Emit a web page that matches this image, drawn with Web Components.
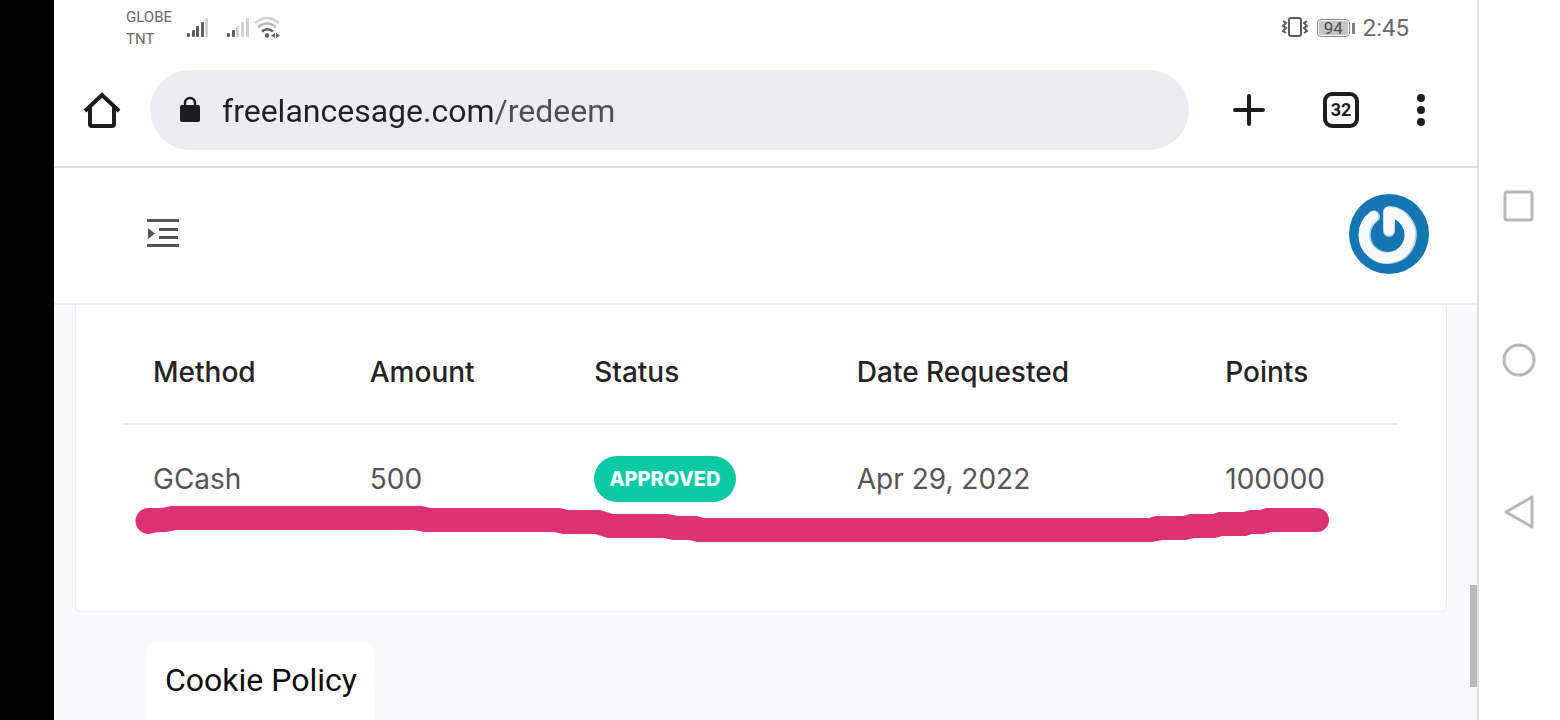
<!DOCTYPE html>
<html lang="en">
<head>
<meta charset="utf-8">
<title>Redeem</title>
<style>
    body {
        margin: 0;
        background: #fff;
        font-family: Roboto, "Liberation Sans", sans-serif;
        color: #202124;
    }
</style>
</head>
<body>
<phone-screen>
    <status-bar slot="top"></status-bar>
    <browser-bar slot="top"></browser-bar>
    <site-header slot="top"></site-header>
    <redeem-card>
        <status-badge slot="status">APPROVED</status-badge>
    </redeem-card>
    <cookie-link>Cookie Policy</cookie-link>
    <system-nav slot="nav"></system-nav>
</phone-screen>

<script>
class BaseElement extends HTMLElement {
    constructor() {
        super();
        this.attachShadow({ mode: 'open' });
        this.shadowRoot.innerHTML = this.render();
    }
}

class PhoneScreen extends BaseElement {
    render() {
        return `
    <style>
        :host {
            display: grid;
            grid-template-columns: 54px 1fr 81px;
            height: 100vh;
            overflow: hidden;
        }
        .cutout { background: #000; }
        .page {
            display: flex;
            flex-direction: column;
            min-width: 0;
            min-height: 0;
            border-right: 2px solid #e0e0e2;
            position: relative;
        }
        main {
            flex: 1;
            min-height: 0;
            overflow: hidden;
            background: #faf9fe;
            padding: 0 30px 0 21px;
        }
        .thumb {
            position: absolute;
            right: 0;
            bottom: 33px;
            width: 7px;
            height: 102px;
            background: #bababa;
        }
    </style>
    <div class="cutout"></div>
    <div class="page">
        <slot name="top"></slot>
        <main><slot></slot></main>
        <div class="thumb"></div>
    </div>
    <slot name="nav"></slot>`;
    }
}

class StatusBar extends BaseElement {
    render() {
        return `
    <style>
        :host {
            display: flex;
            align-items: center;
            height: 56px;
            padding: 0 68px 0 72px;
            color: #69696b;
        }
        .carriers {
            font-size: 15px;
            line-height: 22px;
            width: 60px;
        }
        .signals { flex: 1; }
        svg { display: block; }
        .right {
            display: flex;
            align-items: center;
            gap: 8px;
        }
        .battery {
            display: flex;
            align-items: center;
            gap: 2px;
        }
        .battery span {
            width: 29px;
            height: 14px;
            line-height: 14px;
            border: 1px solid #8c8c8c;
            border-radius: 4px;
            padding: 1px;
            background: #c6c6c6 content-box;
            font-size: 17px;
            text-align: center;
            color: #4c4c4e;
        }
        .battery i {
            width: 3px;
            height: 11px;
            background: #808080;
        }
        time {
            font-size: 24px;
            line-height: 28px;
        }
    </style>
    <div class="carriers">GLOBE<br>TNT</div>
    <div class="signals">
        <svg width="96" height="28" viewBox="0 0 96 28" fill="#5e5e60">
            <g>
                <rect x="1" y="19" width="3" height="4" rx="1"/>
                <rect x="6" y="16" width="3" height="7" rx="1"/>
                <rect x="10" y="12" width="3" height="11" rx="1"/>
                <rect x="15" y="8" width="3" height="15" rx="1"/>
                <rect x="19" y="4" width="3" height="19" rx="1" fill="#d2d2d2"/>
            </g>
            <g>
                <rect x="41" y="19" width="3" height="4" rx="1"/>
                <rect x="46" y="16" width="3" height="7" rx="1"/>
                <rect x="50" y="12" width="3" height="11" rx="1" fill="#d2d2d2"/>
                <rect x="55" y="8" width="3" height="15" rx="1" fill="#d2d2d2"/>
                <rect x="60" y="4" width="3" height="19" rx="1" fill="#d2d2d2"/>
            </g>
            <g fill="none" stroke-width="2.6">
                <path d="M69 9Q81 -1 93 9" stroke="#cecece"/>
                <path d="M72 13Q81 6 90 13" stroke="#b8b8b8"/>
                <path d="M76 17.500Q81 13 87 17.500" stroke="#5e5e60"/>
            </g>
            <circle cx="81" cy="21.500" r="2.200"/>
            <path d="M89 19v5l-4-2.500zM90 19v5l4-2.500z"/>
        </svg>
    </div>
    <div class="right">
        <svg width="28" height="24" viewBox="0 0 28 24" fill="none" stroke="#5c5c5e" stroke-width="2">
            <rect x="8" y="2" width="12" height="18" rx="2"/>
            <path d="M2 5l3 2-3 3 3 2-3 3 3 2M26 5l-3 2 3 3-3 2 3 3-3 2"/>
        </svg>
        <div class="battery"><span>94</span><i></i></div>
        <time>2:45</time>
    </div>`;
    }
}

class BrowserBar extends BaseElement {
    render() {
        return `
    <style>
        :host {
            display: flex;
            align-items: center;
            padding: 14px 32px 16px 24px;
            border-bottom: 2px solid #e1e1e4;
        }
        button {
            display: flex;
            align-items: center;
            justify-content: center;
            width: 48px;
            height: 48px;
            padding: 0;
            border: 0;
            background: none;
            color: #1d1d20;
        }
        .address {
            flex: 1;
            display: flex;
            align-items: center;
            gap: 20px;
            height: 80px;
            margin: 0 36px 0 24px;
            padding: 0 28px;
            border-radius: 40px;
            background: #edecf2;
        }
        /* host name dark, path lighter */
        input {
            flex: 1;
            min-width: 0;
            box-sizing: border-box;
            height: 48px;
            padding: 2px 0 0;
            border: 0;
            outline: 0;
            font: 32px Roboto, "Liberation Sans", sans-serif;
            color: #202124;
            -webkit-text-fill-color: transparent;
            background: linear-gradient(90deg, #202124 272px, #4d4e53 272px);
            -webkit-background-clip: text;
            background-clip: text;
        }
        .tools {
            display: flex;
            gap: 44px;
        }
        .more { margin-left: -12px; }
        .tabs span {
            box-sizing: border-box;
            width: 36px;
            height: 36px;
            border: 4px solid #1d1d20;
            border-radius: 9px;
            font: bold 18px/28px Roboto, "Liberation Sans", sans-serif;
        }
    </style>
    <button aria-label="Home">
        <svg width="40" height="40" viewBox="0 0 40 40" fill="none" stroke="currentColor" stroke-width="4">
            <path d="M3 21L20 5l17 16M8 17v17q0 2 2 2h20q2 0 2-2V17"/>
        </svg>
    </button>
    <div class="address">
        <svg width="24" height="28" viewBox="0 0 24 28">
            <rect x="2" y="9" width="20" height="17" rx="2" fill="#1d1d20"/>
            <path d="M7 10V7a5 5 0 0 1 10 0v3" fill="none" stroke="#1d1d20" stroke-width="2.400"/>
        </svg>
        <input type="text" aria-label="Address" value="freelancesage.com/redeem">
    </div>
    <div class="tools">
        <button aria-label="New tab">
            <svg width="32" height="32" viewBox="0 0 32 32" stroke="currentColor" stroke-width="4" stroke-linecap="round">
                <path d="M16 2v28M2 16h28"/>
            </svg>
        </button>
        <button class="tabs" aria-label="Tabs"><span>32</span></button>
        <button class="more" aria-label="More">
            <svg width="10" height="34" viewBox="0 0 10 34" fill="currentColor">
                <circle cx="5" cy="5" r="4"/><circle cx="5" cy="17" r="4"/><circle cx="5" cy="29" r="4"/>
            </svg>
        </button>
    </div>`;
    }
}

class SiteHeader extends BaseElement {
    render() {
        return `
    <style>
        :host {
            display: flex;
            align-items: center;
            justify-content: space-between;
            box-sizing: border-box;
            height: 137px;
            padding: 0 48px 4px 92px;
            border-bottom: 2px solid #eeeef1;
        }
        button {
            padding: 0;
            border: 0;
            background: none;
        }
        svg { display: block; }
    </style>
    <button aria-label="Menu">
        <svg width="34" height="34" viewBox="0 0 34 34" fill="#555">
            <path d="M1 2h32v3H1zM13 11h19v3H13zM13 19h19v3H13zM1 27h32v3H1zM2 11v11l7-5.500z"/>
        </svg>
    </button>
    <button aria-label="Account">
        <svg width="80" height="80" viewBox="0 0 80 80" fill="none" stroke-linecap="round" stroke-linejoin="round">
            <circle cx="40" cy="40" r="40" fill="#1477b4"/>
            <path d="M25 22.500A23 23 0 1 0 40 18V37" stroke="#b8d2e4" stroke-width="12"/>
            <path d="M24 22.500A23 23 0 1 0 40 18V36" stroke="#f7f9fb" stroke-width="10.500"/>
        </svg>
    </button>`;
    }
}

class StatusBadge extends BaseElement {
    render() {
        return `
    <style>
        :host {
            display: inline-block;
            padding: 0 15px;
            border-radius: 23px;
            background: #0ac9a5;
            color: #effffb;
            font: 800 20px/46px Inter, sans-serif;
            vertical-align: middle;
        }
    </style>
    <slot></slot>`;
    }
}

class RedeemCard extends BaseElement {
    render() {
        return `
    <style>
        :host {
            display: block;
            padding: 15px 48px 79px 47px;
            background: #fff;
            border: 1px solid #eeeef2;
            border-top: 0;
            border-radius: 0 0 6px 6px;
            font-family: Inter, "Open Sans", sans-serif;
        }
        .wrap { position: relative; }
        table {
            width: 100%;
            table-layout: fixed;
            border-collapse: collapse;
            text-align: left;
            font-size: 28px;
            line-height: 40px;
            white-space: nowrap;
        }
        th, td {
            box-sizing: border-box;
            padding: 0 0 0 30px;
        }
        th {
            height: 104px;
            font-weight: 500;
            color: #242426;
            border-bottom: 2px solid #ebebee;
        }
        td {
            height: 108px;
            color: #555557;
        }
        th:nth-child(1) { width: 17%; }
        th:nth-child(2) { width: 17.6%; }
        th:nth-child(3) { width: 20.6%; }
        th:nth-child(4) { width: 28.9%; }
        .marker {
            position: absolute;
            left: 12px;
            bottom: -12px;
            width: calc(100% - 81px);
            height: 40px;
        }
    </style>
    <div class="wrap">
        <table>
            <thead>
                <tr><th>Method</th><th>Amount</th><th>Status</th><th>Date Requested</th><th>Points</th></tr>
            </thead>
            <tbody>
                <tr><td>GCash</td><td>500</td><td><slot name="status"></slot></td><td>Apr 29, 2022</td><td>100000</td></tr>
            </tbody>
        </table>
        <svg class="marker" viewBox="135 504 1194 40" preserveAspectRatio="none" fill="#dd3173">
            <path d="M148 508L162 508L171 506H422L430 508H560L568 510H600L613 514H668L678 516H697L704 518H1149L1156 516H1183L1190 514H1213L1219 512H1243L1250 510L1260 510L1266 508H1317A12 12 0 0 1 1317 532H1271L1263 534H1252L1246 536H1222L1215 538H1194L1186 540H1162L1152 542H697L690 540H673L664 538H608L595 534H563L554 532H424L414 530H176L166 532H158L149 534A13 13 0 0 1 148 508Z"/>
        </svg>
    </div>`;
    }
}

class CookieLink extends BaseElement {
    render() {
        return `
    <style>
        :host {
            display: block;
            padding: 30px 0 0 71px;
        }
        a {
            display: inline-block;
            padding: 18px 18px 22px 19px;
            border-radius: 14px 14px 0 0;
            background: #fff;
            color: #0c0c0c;
            font-size: 32px;
            line-height: 40px;
            text-decoration: none;
        }
    </style>
    <a href="#cookies"><slot></slot></a>`;
    }
}

class SystemNav extends BaseElement {
    render() {
        return `
    <style>
        :host {
            display: flex;
            flex-direction: column;
            align-items: center;
            justify-content: center;
            gap: 113px;
            padding-right: 2px;
        }
        button {
            width: 40px;
            height: 40px;
            padding: 0;
            border: 0;
            background: none;
        }
        svg {
            display: block;
            fill: none;
            stroke: #b8b8b8;
            stroke-width: 3;
            stroke-linejoin: round;
        }
    </style>
    <button aria-label="Recent apps"><svg width="40" height="40"><rect x="6" y="5" width="27" height="28" rx="2"/></svg></button>
    <button aria-label="Home screen"><svg width="40" height="40"><circle cx="20" cy="20" r="15"/></svg></button>
    <button aria-label="Back"><svg width="40" height="40"><path d="M7 19L33 4v30z"/></svg></button>`;
    }
}

customElements.define('phone-screen', PhoneScreen);
customElements.define('status-bar', StatusBar);
customElements.define('browser-bar', BrowserBar);
customElements.define('site-header', SiteHeader);
customElements.define('status-badge', StatusBadge);
customElements.define('redeem-card', RedeemCard);
customElements.define('cookie-link', CookieLink);
customElements.define('system-nav', SystemNav);
</script>
</body>
</html>
